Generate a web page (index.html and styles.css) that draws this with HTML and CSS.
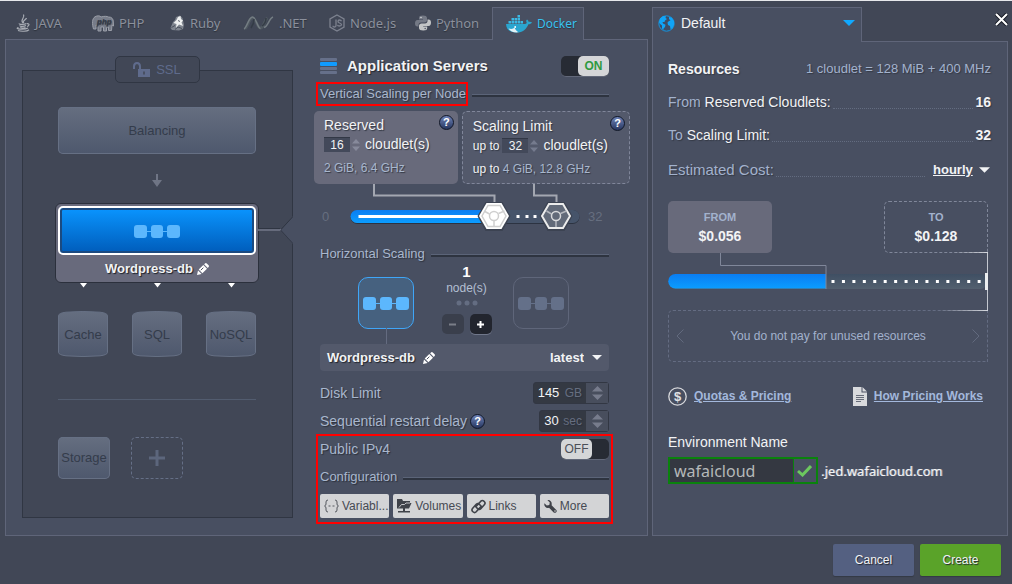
FILE: index.html
```html
<!DOCTYPE html>
<html lang="en">
<head>
<meta charset="utf-8">
<title>Environment Topology</title>
<link rel="stylesheet" href="styles.css">
</head>
<body>
<svg class="defs" width="0" height="0" aria-hidden="true">
  <defs>
    <linearGradient id="blue" x1="0" y1="0" x2="0" y2="1"><stop offset="0" stop-color="#0a7df2"/><stop offset="1" stop-color="#0b9dff"/></linearGradient>
    <linearGradient id="slot" x1="0" y1="0" x2="0" y2="1"><stop offset="0" stop-color="#3f4f63"/><stop offset="1" stop-color="#53606f"/></linearGradient>
    <linearGradient id="cyl" x1="0" y1="0" x2="0" y2="1"><stop offset="0" stop-color="#656e80"/><stop offset="1" stop-color="#4e586d"/></linearGradient>
    <symbol id="pencil" viewBox="0 0 12 12"><path fill="#fff" d="M0 12l1-4.600 3.600 3.600zM1.700 6.600l4.600-4.500 3.700 3.700-4.600 4.500zM7.100 1.300L8 .4q.9-.8 1.800 0l1.800 1.800q.8.9 0 1.800l-.8.900z"/><path d="M3.800 7.200l2.600-2.500" stroke="#4c5161" fill="none"/></symbol>
    <symbol id="nodes" viewBox="0 0 46 14"><path d="M12 7.500h22" stroke="currentColor" stroke-width="1"/><rect width="13" height="13" y="1" rx="3" fill="currentColor"/><rect x="17" width="12" height="13" y="1" rx="3" fill="currentColor"/><rect x="33" width="13" height="13" y="1" rx="3" fill="currentColor"/></symbol>
    <symbol id="caret" viewBox="0 0 12 6"><path fill="currentColor" d="M0 0h12L6 6z"/></symbol>
  </defs>
</svg>
<main class="wizard">
  <section class="side left">
    <nav class="tabs">
      <button class="tab"><svg width="14" height="18" viewBox="0 0 14 18" fill="none" stroke="#a9adb5" stroke-width="1.200"><path d="M7 9C3.500 5.500 9.500 4 7.500.5M8 9c-2.500-2 2-3 2.500-5"/><path d="M3.500 9.500c-1.500 1 5 1.300 7 0M4 11.500c-.5 1 4 1.200 6 0M4.500 13.300c0 1 3 1 5 .2M11 9.800c3-.6 2.300 2.200 0 2.700M2.500 13.500c-5 1.700 6 2.600 9.500.5M2 16.500c3 1.200 9 1 11-.8"/></svg>JAVA</button>
      <button class="tab"><svg width="22" height="17" viewBox="0 0 22 17"><path fill="#777c89" stroke="#9a9ea8" d="M1.500 14C0 9 0 3.500 3 1.800 5 .5 8 .5 9 2c3-1 6-.8 7.500 0 3-.2 5 2 4.800 5l.2 4-1.500-1-.5 5.500h-3V12l-2 .3V16h-3v-4H9v4H6v-5l-2-1v4z"/><text x="5" y="9" class="logo-php">php</text></svg>PHP</button>
      <button class="tab"><svg width="15" height="16" viewBox="0 0 15 16"><path fill="#7f858f" d="M.5 13L3 7l2-2 1-3 4-1.500 2.500 2.500L14 10l-1 4-4 1.500-7-.5z"/><path fill="#eef0f0" d="M6.500 5L8 2l2.500-1L11 4l2 1.500-1.500 2L13 11l-4-1.500L6 13l.5-4L3.500 8z"/><path stroke="#3c424f" fill="none" stroke-width=".8" d="M1.500 12.500l3.500-2M5 14.500l3-2.500 4 1.500M8 5.500l2 1"/></svg>Ruby</button>
      <button class="tab net"><svg width="31" height="14" viewBox="0 0 31 14" fill="none"><path stroke="#4f5860" stroke-width="3" d="M2 12.500C5 11 6 2 9.500 2s4.500 10 8 10 4-8.500 7-10"/><path stroke="#747d83" stroke-width="1.500" d="M1 13C4 12 5.500 1 9.500 1c3.500 0 5 11.500 8 11.500M21 11.500c4-1 5-9 9-10.500"/><path stroke="#343c46" stroke-width="1.500" d="M8 12c2-3 3-6 3-9M19 10c3-2 4-6 4-8"/></svg>.NET</button>
      <button class="tab"><svg width="16" height="18" viewBox="0 0 16 18" fill="none" stroke="#7d828f" stroke-width="1.300"><path d="M8 1l7 4v8l-7 4-7-4V5z"/><path d="M7 5.500v6q0 1.500-1.500 1.500T4 11.800M12.500 7.300Q12 6 10.500 6T9 7.500q0 1 1.500 1.500t2 1.500q0 1.500-2 1.500T8.800 10.800"/></svg>Node.js</button>
      <button class="tab"><svg width="16" height="16" viewBox="0 0 16 16"><path fill="#747985" d="M8 .5c-3 0-4 .8-4 2.500v1.500h4V5H2.500C.8 5 0 6.500 0 8.500s.8 3 2.500 3h1V10c0-1.500 1-2.500 2.500-2.500h3.500c1.500 0 2.500-1 2.500-2.200V3C12 1.300 10.500.5 8 .5z"/><path fill="#c3c5c6" d="M8.200 15.500c3 0 4-.8 4-2.500v-1.500h-4V11h5.500c1.500 0 2.300-1.500 2.300-3.500s-.8-3-2.500-3h-1V6c0 1.500-1 2.500-2.500 2.500H6.500C5 8.500 4 9.500 4 10.800V13c0 1.700 1.500 2.500 4.200 2.500z"/><circle cx="6" cy="2.500" r=".8" fill="#d5d6d8"/><circle cx="10.200" cy="13.500" r=".8" fill="#565b68"/></svg>Python</button>
      <button class="tab active"><svg width="26" height="18" viewBox="0 0 26 18"><path fill="#2aa5cf" d="M0 9h19c2 0 2-2 1-3l1-1.500c1 .5 1.500 1.500 1.600 2.300 1-.3 2.500-.2 3.400.4-.8 1.500-2 2-3.600 2C20.500 14 17 17.500 10.500 17.500 4 17.500.5 15 0 9z"/><path fill="#3bb9e4" d="M2.500 6H5v2.500H2.500zM5.500 6H8v2.500H5.500zM8.500 6H11v2.500H8.500zM11.500 6H14v2.500h-2.500zM14.500 6H17v2.500h-2.500zM5.500 3H8v2.500H5.500zM8.500 3H11v2.500H8.500zM11.500 3H14v2.500h-2.500zM11.500 0H14v2.500h-2.500z"/><path fill="#e4f1f5" d="M2.500 13.500c3 1 5 .3 6-1 1 2.500 2.500 4 4 4.800-4.500.6-8-.8-10-3.800z"/><circle cx="9.200" cy="12" r=".9" fill="#fff"/></svg>Docker</button>
    </nav>
    <div class="panel topology">
      <div class="canvas">
        <button class="ssl"><svg width="17" height="15" viewBox="0 0 17 15"><path fill="none" stroke="#5f6b8c" stroke-width="2" d="M1 7V4.500Q1 1 4 1t3 3.500V7"/><path fill="#5f6b8c" d="M5 7h12v8H5z"/><path stroke="#414756" stroke-width="1.500" d="M11 9.500v3"/></svg>SSL</button>
        <button class="layer balancing">Balancing</button>
        <svg class="down" width="10" height="13" viewBox="0 0 10 13"><path fill="#6f7585" d="M4 0h2v6h4l-5 7-5-7h4z"/></svg>
        <div class="selected">
          <button class="server" aria-label="Application server"><svg width="46" height="14"><use href="#nodes"/></svg></button>
          <div class="caption">Wordpress-db <svg width="12" height="12"><use href="#pencil"/></svg></div>
          <svg class="link" width="35" height="28" viewBox="0 0 35 28"><path fill="#484f61" d="M35 0L23 14l12 14z"/><path stroke="#2f3542" fill="none" d="M0 12.500h22M23 13.500L35 .5"/><path stroke="#666b7c" stroke-width="2" fill="none" d="M0 14h23"/><path stroke="#343a48" fill="none" d="M22.500 14L35 27.500"/></svg>
        </div>
        <svg class="ports" width="198" height="5" viewBox="0 0 198 5"><path fill="#fff" d="M22 0h7l-3.500 4.500zM96 0h7l-3.500 4.500zM170 0h7l-3.500 4.500z"/></svg>
        <div class="stores">
          <button class="store"><svg viewBox="0 0 50 46"><path fill="url(#cyl)" stroke="#667084" d="M.5 4.500Q1 2 8 1.200q17-1.500 34 0Q49 2 49.500 4.500v37Q49 44 42 44.800q-17 1.500-34 0Q1 44 .5 41.500z"/></svg><span>Cache</span></button>
          <button class="store"><svg viewBox="0 0 50 46"><path fill="url(#cyl)" stroke="#667084" d="M.5 4.500Q1 2 8 1.200q17-1.500 34 0Q49 2 49.500 4.500v37Q49 44 42 44.800q-17 1.500-34 0Q1 44 .5 41.500z"/></svg><span>SQL</span></button>
          <button class="store"><svg viewBox="0 0 50 46"><path fill="url(#cyl)" stroke="#667084" d="M.5 4.500Q1 2 8 1.200q17-1.500 34 0Q49 2 49.500 4.500v37Q49 44 42 44.800q-17 1.500-34 0Q1 44 .5 41.500z"/></svg><span>NoSQL</span></button>
        </div>
        <hr class="divider">
        <div class="extras">
          <button class="layer storage">Storage</button>
          <button class="add" aria-label="Add layer"><svg width="16" height="16" viewBox="0 0 16 16"><path stroke="#5c667c" stroke-width="3" d="M8 0v16M0 8h16"/></svg></button>
        </div>
      </div>

      <div class="settings">
        <header class="title">
          <svg width="17" height="18" viewBox="0 0 17 18"><rect width="17" height="3" rx="1" y="1" fill="#66708a"/><rect width="17" height="4" rx="1" y="5" fill="#109bff"/><rect width="17" height="3" rx="1" y="10" fill="#66708a"/><rect width="17" height="3" rx="1" y="14" fill="#66708a"/></svg>
          <h2>Application Servers</h2>
          <label class="toggle"><input type="checkbox" checked aria-label="Application servers"><span class="knob">ON</span></label>
        </header>
        <h3 class="rule"><span class="marked">Vertical Scaling per Node</span></h3>
        <div class="cards">
          <div class="card reserved">
            <i class="help">?</i>
            <label for="res">Reserved</label>
            <div class="amount"><input id="res" value="16"><svg width="8" height="14" viewBox="0 0 8 14"><path fill="#878a9b" d="M0 5.500L4 1l4 4.500zM0 8.500h8L4 13z"/></svg><b>cloudlet(s)</b></div>
            <small>2 GiB, 6.4 GHz</small>
          </div>
          <div class="card limit">
            <i class="help">?</i>
            <label for="lim">Scaling Limit</label>
            <div class="amount"><em>up to</em><input id="lim" value="32"><svg width="8" height="14" viewBox="0 0 8 14"><path fill="#757b8e" d="M0 5.500L4 1l4 4.500zM0 8.500h8L4 13z"/></svg><b>cloudlet(s)</b></div>
            <small><em>up to</em> 4 GiB, 12.8 GHz</small>
          </div>
        </div>
        <div class="slider">
          <span class="bound">0</span>
          <svg viewBox="0 0 230 52" aria-hidden="true">
            <rect x="1" y="26" width="229" height="14" rx="7" fill="#2c3341"/><rect x="1" y="26" width="229" height="13" rx="6.500" fill="#46546a"/>
            <path fill="url(#blue)" d="M7.500 26H145v13H7.500a6.500 6.500 0 010-13z"/>
            <path stroke="#fff" stroke-width="3" d="M9 32.500h120"/>
            <path fill="#fff" d="M167 31h3v3h-3zM176 31h3v3h-3zM184 31h3v3h-3z"/>
            <path fill="none" stroke="#a3a7b1" stroke-width="2" d="M24.500 0v11.500H145V20M184.500 0v11.500H207V20"/>
            <path fill="#3c4352" d="M128 32l8-14h17l8 14-8 15h-17z"/><path fill="#fff" d="M129.500 32l7.500-13h15l7.500 13-7.500 13h-15z"/><g fill="none" stroke="#cfcfcf" stroke-width="1.500"><path d="M132.500 32l6-10.500h12l6 10.500-6 10.500h-12zM134.500 27l5.500 3M155 27l-6 2.500M144.500 36.500v6"/><circle cx="144.500" cy="32" r="4.500"/></g>
            <path fill="#3c4352" d="M190 32l8-14h17l8 14-8 15h-17z"/><path fill="#626a79" stroke="#ececec" stroke-width="2" d="M192.500 32l7-12h14l7 12-7 12h-14z"/><g fill="none" stroke="#b4b7be" stroke-width="1.500"><path d="M197 27l5 3M217 27l-6 2.500M206.500 36.500v6.500"/><circle cx="206.500" cy="32" r="4.500" stroke="#d9dadc"/></g>
          </svg>
          <span class="bound">32</span>
          <input class="range" type="range" min="0" max="32" value="16" aria-label="Reserved cloudlets">
          <input class="range" type="range" min="0" max="32" value="32" aria-label="Scaling limit">
        </div>
        <h3 class="rule"><span>Horizontal Scaling</span></h3>
        <div class="scaling">
          <div class="node on"><svg width="46" height="14"><use href="#nodes"/></svg></div>
          <div class="count"><strong>1</strong><span>node(s)</span><svg width="22" height="6" viewBox="0 0 22 6"><g fill="#646d82"><circle cx="3" cy="3" r="2.500"/><circle cx="11" cy="3" r="2.500"/><circle cx="19" cy="3" r="2.500"/></g></svg>
            <div class="steps"><button aria-label="Remove node"><svg width="7" height="7" viewBox="0 0 7 7"><path stroke="#7a7e88" stroke-width="2" d="M0 3.500h7"/></svg></button><button class="plus" aria-label="Add node"><svg width="7" height="7" viewBox="0 0 7 7"><path stroke="#fff" stroke-width="2" d="M0 3.500h7M3.500 0v7"/></svg></button></div>
          </div>
          <div class="node"><svg width="46" height="14"><use href="#nodes"/></svg></div>
        </div>
        <div class="version"><label for="tag">Wordpress-db</label><svg width="12" height="12"><use href="#pencil"/></svg><select id="tag"><option>latest</option></select><svg width="10" height="5"><use href="#caret"/></svg></div>
        <div class="field"><label for="disk">Disk Limit</label><span class="spin"><input id="disk" class="w3" value="145"><span>GB</span><i><svg width="11" height="14" viewBox="0 0 11 14"><path fill="#777c8c" d="M0 5.500L5.500 0 11 5.500zM0 8.500h11L5.500 14z"/></svg></i></span></div>
        <div class="field"><label for="delay">Sequential restart delay</label><i class="help">?</i><span class="spin"><input id="delay" value="30"><span>sec</span><i><svg width="11" height="14" viewBox="0 0 11 14"><path fill="#777c8c" d="M0 5.500L5.500 0 11 5.500zM0 8.500h11L5.500 14z"/></svg></i></span></div>
        <div class="marked group">
          <div class="field"><label for="ip">Public IPv4</label><label class="toggle off"><input id="ip" type="checkbox"><span class="knob">OFF</span></label></div>
          <h3 class="rule"><span>Configuration</span></h3>
          <div class="config">
            <button><svg width="15" height="14" viewBox="0 0 15 14" fill="none" stroke="#55585f"><path d="M4 1Q2 1 2 3v2q0 1.500-1.500 2Q2 7.500 2 9v2q0 2 2 2M11 1q2 0 2 2v2q0 1.500 1.500 2-1.500.5-1.500 2v2q0 2-2 2M4.500 7h2M8.500 7h2"/></svg>Variabl...</button>
            <button><svg width="15" height="14" viewBox="0 0 15 14" fill="#3f4249"><path d="M0 0h5l1 2h7v2h1.500L12 9.500H8V12h5v1.500H1V12h5V9.500H0z"/><path stroke="#d3d4d6" stroke-width=".9" fill="none" d="M2 8.500L4.500 5.500h3L9 4h4"/></svg>Volumes</button>
            <button><svg width="15" height="15" viewBox="0 0 15 15" fill="none" stroke="#3f4249" stroke-width="1.600"><path d="M6 9L4.800 7.800l5-5.600c2-1.800 5.500 1 3.700 3.300l-3.700 4.200C8.500 11 7 10.500 6 9zM8.800 5.700l1.400 1.500-5 5.600c-2 2-5.500-1-3.700-3.300l3.700-4.200C6.500 4.200 8 4.500 8.800 5.700z"/></svg>Links</button>
            <button><svg width="13" height="13" viewBox="0 0 13 13" fill="#3f4249"><path d="M3.500.2L5.800 2.500 5.300 5l-2.500.5L.4 3.200C-.3 6 2 8.600 5 7.700l4.700 4.700c1.700 1.400 4-.8 2.600-2.500L7.600 5.200C8.400 2.300 6.200-.4 3.500.2zM11 10.200a.8.800 0 110 1.600.8.800 0 010-1.600z"/></svg>More</button>
          </div>
        </div>
      </div>
    </div>
  </section>

  <section class="side right">
    <div class="region-bar">
      <div class="region">
        <svg width="17" height="17" viewBox="0 0 17 17"><circle cx="8.500" cy="8.500" r="7.700" fill="#3d4d66" stroke="#1595e0"/><path fill="#10a4f7" d="M1 7l1-3.500L5 1l3 .3-.5 1.700L9 4 7 5.500 6.500 7H4.500L5 8.500l2.500 1.300L7 12l-1.500 1.500V15L4 13.500V10.500L1.500 8.500zM11 2l2.500.5L16 6v4l-1.500 3.500L12.500 14l-.5-3-2-1-.5-2.500L11 6l1.500-.5L11 4z"/></svg>
        <select aria-label="Region"><option>Default</option></select>
        <svg class="cyan" width="12" height="6"><use href="#caret"/></svg>
      </div>
      <button class="close" aria-label="Close"><svg width="13" height="13" viewBox="0 0 13 13"><path stroke="#171b24" stroke-width="4" d="M1 1l11 11M12 1L1 12"/><path stroke="#fff" stroke-width="2" d="M1 1l11 11M12 1L1 12"/></svg></button>
    </div>
    <div class="panel pricing">
      <div class="line head"><h2>Resources</h2><span class="soft">1 cloudlet = 128 MiB + 400 MHz</span></div>
      <div class="line"><span><i>From</i> Reserved Cloudlets:</span><u></u><b>16</b></div>
      <div class="line"><span><i>To</i> Scaling Limit:</span><u></u><b>32</b></div>
      <div class="line cost"><label for="period">Estimated Cost:</label><u></u><select id="period"><option>hourly</option></select><svg width="11" height="6"><use href="#caret"/></svg></div>
      <div class="estimate">
        <div class="prices">
          <div class="price from"><span>FROM</span><b>$0.056</b></div>
          <div class="price to"><span>TO</span><b>$0.128</b></div>
        </div>
        <svg class="meter" viewBox="0 0 320 57" preserveAspectRatio="none" aria-hidden="true">
          <rect x="1" y="21" width="318" height="15" rx="7" fill="url(#slot)"/>
          <path fill="url(#blue)" d="M7.500 21H158v14.500H7.500a7 7 0 010-14.500z"/>
          <path stroke="#fff" stroke-width="3" stroke-dasharray="3 7.440" d="M163.500 28.500H316"/>
          <path fill="none" stroke="#80879a" d="M52.500 0v12.500H158V36"/>
          <path stroke="#c4c8d0" d="M319.500 0v57"/><path stroke="#eceef0" stroke-width="3" d="M318.500 20v17"/>
        </svg>
        <div class="tip"><svg width="8" height="14" viewBox="0 0 8 14"><path fill="none" stroke="#626a7e" d="M7.500.5L1 7l6.500 6.500"/></svg><span>You do not pay for unused resources</span><svg width="8" height="14" viewBox="0 0 8 14"><path fill="none" stroke="#626a7e" d="M.5.5L7 7 .5 13.500"/></svg></div>
      </div>
      <div class="links">
        <svg width="19" height="19" viewBox="0 0 19 19"><circle cx="9.500" cy="9.500" r="8.700" fill="none" stroke="#d8d9dc" stroke-width="1.300"/><text x="9.500" y="14" class="dollar">$</text></svg><a href="#quotas">Quotas &amp; Pricing</a>
        <svg class="doc" width="14" height="19" viewBox="0 0 14 19"><path fill="#d9dadd" d="M0 0h8.500v5.500H14V19H0zM9.500 0L14 4.500H9.500z"/><path stroke="#676c79" d="M3 8.500h8M3 10.500h8M3 12.500h8M3 14.500h5"/></svg><a href="#pricing">How Pricing Works</a>
      </div>
      <label class="env" for="env">Environment Name</label>
      <div class="domain"><span class="valid"><input id="env" value="wafaicloud"><svg width="15" height="12" viewBox="0 0 15 12"><path fill="none" stroke="#6cc85f" stroke-width="3" d="M1 6l4.500 4L14 1"/></svg></span><span>.jed.wafaicloud.com</span></div>
    </div>
  </section>
</main>
<footer class="actions"><button>Cancel</button><button class="create">Create</button></footer>
</body>
</html>
```
FILE: styles.css
```css
* { box-sizing: border-box; }
body {
  margin: 0;
  min-height: 100vh;
  display: flex;
  flex-direction: column;
  background: #414756;
  border-top: 1px solid #e6e8eb;
  color: #f2f3f5;
  font: 13px/16px "Liberation Sans", Arial, sans-serif;
}
button, input, select { font: inherit; color: inherit; margin: 0; padding: 0; border: 0; background: none; }
button { cursor: pointer; }
select { appearance: none; }
h2, h3 { margin: 0; font-weight: normal; }
svg { display: block; flex: none; }
i, em { font-style: normal; }
.defs { position: absolute; }

.wizard { flex: 1; display: flex; gap: 4px; padding: 0 4px 0 5px; }
.side { display: flex; flex-direction: column; min-width: 0; }
.left { flex: 643 1 0; }
.right { flex: 356 1 0; }
.panel { flex: 1; background: #484f61; border: 1px solid #5f6579; }

.tabs {
  display: grid;
  grid-template-columns: 76px 78px 73px 86px 86px 88px 92px;
  height: 38px;
  padding-top: 6px;
}
.tab {
  display: flex;
  align-items: center;
  gap: 5px;
  padding: 0 0 0 11px;
  color: #8b909c;
  font: 13px/16px "Noto Sans", "Open Sans", sans-serif;
  text-shadow: 0 1px 1px #2c313c;
}
.tab.active {
  margin-bottom: -1px;
  padding-left: 13px;
  background: #484f61;
  border: 1px solid #5f6579;
  border-bottom: 0;
  color: #38c2f0;
  font-size: 12px;
  z-index: 1;
}
.logo-php { font: italic bold 8px "Liberation Sans", sans-serif; fill: #343a47; }

.topology {
  display: grid;
  grid-template-columns: 271fr 289fr;
  gap: 27px;
  padding: 0 38px 17px 16px;
}
.canvas {
  position: relative;
  display: flex;
  flex-direction: column;
  align-items: center;
  margin-top: 30px;
  padding: 36px 36px 36px 35px;
  background: #414756;
  border: 1px solid #303643;
}
.ssl {
  position: absolute;
  top: -15px;
  display: flex;
  align-items: center;
  justify-content: center;
  gap: 6px;
  width: 85px;
  height: 27px;
  background: #414756;
  border: 1px solid #303643;
  border-radius: 5px;
  color: #5f6b8c;
}
.layer {
  background: linear-gradient(#656e80, #4e586d);
  border-radius: 5px;
  box-shadow: inset 0 0 0 1px #667084;
  color: #343c4b;
}
.balancing { align-self: stretch; height: 47px; }
.down { margin: 20px 0 16px; }
.selected {
  position: relative;
  align-self: stretch;
  margin: 0 -3px;
  padding: 2px 2px 0;
  height: 80px;
  background: #686a7c;
  border: 1px solid #2b303c;
  border-radius: 6px;
}
.server {
  display: flex;
  width: 100%;
  height: 49px;
  align-items: center;
  justify-content: center;
  border: 2px solid #fff;
  border-radius: 5px;
  background: linear-gradient(#0a95ff, #005cba);
  box-shadow: inset 0 0 0 2px #1b4a80;
  color: #5cb7fd;
}
.caption {
  display: flex;
  align-items: center;
  justify-content: center;
  gap: 4px;
  height: 27px;
  font-weight: bold;
  text-shadow: 1px 1px 1px #1d212a;
}
.link { position: absolute; left: 100%; top: 12px; }
.ports { margin-bottom: 23px; }
.stores { align-self: stretch; display: flex; justify-content: space-between; }
.store { position: relative; width: 50px; height: 46px; color: #343c4b; }
.store span { position: absolute; inset: 0; line-height: 47px; }
.divider { align-self: stretch; width: 100%; margin: 42px 0 37px; border: 0; border-top: 1px solid #525c6f; }
.extras { align-self: stretch; display: flex; gap: 21px; }
.storage { width: 52px; height: 42px; }
.add { display: grid; place-items: center; width: 52px; height: 42px; border: 1px dashed #656f86; border-radius: 5px; }

.settings { padding-top: 15px; min-width: 0; }
.title { display: flex; align-items: center; gap: 10px; height: 22px; text-shadow: 1px 1px 1px #22262f; }
.title h2 { font-size: 15px; font-weight: bold; flex: 1; white-space: nowrap; }
.toggle { display: flex; width: 48px; height: 21px; border-radius: 5px; background: #272b34; justify-content: flex-end; border-bottom: 1px solid #626879; }
.toggle.off { justify-content: flex-start; }
.toggle input { position: absolute; opacity: 0; }
.knob { width: 31px; border-radius: 5px; background: #d5d6d8; color: #2e9a41; font-size: 12px; font-weight: bold; line-height: 20px; text-align: center; text-shadow: none; }
.off .knob { color: #4c4f58; font-weight: normal; }
.rule { display: flex; align-items: center; gap: 6px; margin: 9px 0; font-size: 13px; line-height: 16px; color: #a9b7cd; text-shadow: 1px 1px 1px #2c313c; }
.rule::after { content: ""; flex: 1; height: 2px; margin-top: 3px; background: #2e3440; border-top: 1px solid #5b6478; }
.marked { position: relative; }
.marked::after { content: ""; position: absolute; inset: -4px -2px -4px -4px; border: 2px solid #f00; pointer-events: none; }
.group::after { inset: -4px -4px -6px; }
.cards { display: flex; gap: 4px; margin: 0 -21px 0 -6px; }
.card { position: relative; height: 73px; padding: 6px 10px; border-radius: 5px; text-shadow: 1px 1px 1px #343945; }
.reserved { flex: 143 1 0; background: #686a7b; }
.limit { flex: 169 1 0; background: #53596b; border: 1px dashed #80869a; }
.card label { display: block; font-size: 14px; line-height: 17px; }
.amount { display: flex; align-items: center; margin: 2px 0 7px; }
.amount input { width: 26px; height: 15px; background: #43495a; border-top: 1px solid #323846; text-align: center; font-size: 12px; }
.amount svg { margin: 0 5px 0 2px; }
.amount b { font-weight: normal; font-size: 14px; line-height: 17px; }
.amount em { margin-right: 3px; font-size: 12px; }
.card small { display: block; font-size: 12px; color: #a9b7cd; white-space: nowrap; }
.card small em { color: #f2f3f5; }
.help { display: grid; place-items: center; width: 15px; height: 15px; border: 1px solid #101728; border-radius: 8px; background: linear-gradient(#6e83b8, #27365f); color: #fff; font-size: 11px; font-weight: bold; line-height: 13px; text-shadow: none; }
.card .help { position: absolute; right: 4px; top: 4px; }
.slider { position: relative; display: flex; height: 52px; }
.slider svg { flex: 1; min-width: 0; height: 52px; }
.bound { width: 29px; padding: 25px 0 0 2px; color: #666e7f; }
.bound:nth-of-type(2) { padding-left: 8px; }
.range { position: absolute; left: 29px; right: 29px; bottom: 10px; opacity: 0; }
.slider + .rule { margin: 10px 0 2px; }
.scaling { display: flex; justify-content: space-between; height: 80px; padding: 13px 40px 0 38px; }
.node { position: relative; display: grid; place-items: center; width: 56px; height: 52px; border: 1px solid #5f667a; border-radius: 10px; color: #647089; }
.node.on { background: #46617f; border-color: #3fa6f8; color: #5cb7fd; }
.node.on::after { content: ""; position: absolute; top: 100%; left: 50%; width: 1px; height: 16px; background: #646b80; }
.count { display: flex; flex-direction: column; align-items: center; margin: -13px 0 0 6px; line-height: 16px; font-size: 12px; color: #b3bfd2; }
.count strong { font-size: 15px; color: #fff; }
.count > svg { margin: 4px 0 8px; }
.steps { display: flex; gap: 6px; }
.steps button { display: grid; place-items: center; width: 22px; height: 20px; border-radius: 5px; background: #3a3f4c; }
.steps .plus { background: #22252e; box-shadow: 0 1px 0 #70778a; }
.version { display: flex; align-items: center; height: 27px; padding: 0 7px; border-radius: 4px; background: #53596b; font-weight: bold; text-shadow: 1px 1px 1px #22262f; }
.version svg { margin-left: 8px; }
.version select { margin-left: auto; font-weight: bold; }
.version + .field { margin-top: 11px; }
.field { display: flex; align-items: center; height: 22px; margin-bottom: 6px; font-size: 14px; color: #a9b7cd; text-shadow: 1px 1px 1px #2c313c; }
.field .help { margin-left: 3px; }
.field .toggle { margin-left: auto; }
.spin { display: flex; align-items: center; margin-left: auto; height: 22px; border: 1px solid #323743; border-radius: 3px; background: #343943; font-size: 12px; color: #666e80; }
.spin input { width: 15px; margin: 0 4px; font-size: 13px; color: #f2f3f5; }
.spin .w3 { width: 23px; }
.spin i { display: grid; place-items: center; width: 22px; height: 20px; margin-left: 4px; background: #484e5d; }
.config { display: flex; gap: 4px; }
.config button { flex: 1 1 0; min-width: 0; display: flex; align-items: center; justify-content: flex-start; gap: 3px; height: 24px; padding: 0 2px 0 4px; border-radius: 2px; background: #d3d4d6; color: #464a53; font-size: 12px; white-space: nowrap; }

.region-bar { display: flex; align-items: flex-start; justify-content: space-between; height: 40px; padding-top: 6px; }
.region { position: relative; display: flex; align-items: center; width: 210px; height: 35px; padding: 0 6px 4px 5px; background: #484f61; border: 1px solid #5f6579; border-bottom: 0; }
.region select { flex: 1; margin-left: 6px; font-size: 14px; }
.cyan { color: #10a9ff; }
.close { margin-top: 6px; }
.pricing { padding: 17px 16px 17px 15px; }
.line { display: flex; align-items: center; height: 20px; margin-bottom: 13px; font-size: 14px; white-space: nowrap; text-shadow: 1px 1px 1px #343945; }
.line h2 { font-size: 14px; font-weight: bold; }
.head { justify-content: space-between; }
.line i, .line label, .line .soft { color: #a3b2cd; }
.line .soft { font-size: 13px; }
.line u { flex: 1; margin: 12px 2px 0; border-top: 1px dotted #636c80; }
.cost { margin-top: 15px; }
.cost label { font-size: 15px; }
.cost u { margin-right: 8px; }
.cost select { font-size: 13px; font-weight: bold; text-decoration: underline; }
.cost svg { margin: 0 1px 0 6px; }
.estimate { margin: 21px 3px 0 0; }
.prices { display: flex; justify-content: space-between; font-weight: bold; }
.price { position: relative; display: flex; flex-direction: column; align-items: center; justify-content: center; gap: 4px; width: 104px; height: 52px; border-radius: 5px; font-size: 14px; }
.price span { font-size: 11px; line-height: 14px; color: #a3b2cd; }
.from { background: #686a7b; }
.to { border: 1px dashed #80879a; border-radius: 5px 5px 0 5px; }
.to::after { content: ""; position: absolute; right: -1px; bottom: -1px; width: 36px; height: 1px; background: linear-gradient(90deg, transparent, #d5d8de); }
.meter { width: 100%; height: 57px; }
.tip { position: relative; display: flex; align-items: center; justify-content: space-between; height: 52px; padding: 0 7px; border: 1px dashed #646c82; border-radius: 5px 0 0 5px; color: #a3b2cd; font-size: 12px; }
.tip::after { content: ""; position: absolute; right: -1px; top: -1px; width: 50px; height: 1px; background: linear-gradient(90deg, transparent, #d5d8de); }
.links { display: flex; align-items: center; height: 20px; margin: 24px 8px 26px 0; font-size: 12px; }
.links a { margin-left: 7px; color: #a3b8dc; font-weight: bold; }
.links .doc { margin-left: auto; }
.dollar { font: bold 13px "Liberation Sans", sans-serif; fill: #e0e1e4; text-anchor: middle; }
.env { display: block; font-size: 14px; line-height: 20px; }
.domain { display: flex; align-items: center; margin-top: 5px; font: 13px/16px "Noto Sans", "Open Sans", sans-serif; text-shadow: 1px 0 0 #9a9ea8; }
.valid { display: flex; align-items: center; width: 150px; height: 27px; margin-right: 3px; border: 2px solid #0a820d; }
.valid input { flex: 1; min-width: 0; align-self: stretch; padding: 0 4px; background: #343841; border-right: 1px solid #0a820d; color: #b5b8b9; font-size: 16px; }
.valid svg { margin: 0 4px 0 3px; }
.actions { display: flex; justify-content: flex-end; gap: 6px; padding: 8px 11px 9px; }
.actions button { width: 81px; height: 32px; border-radius: 2px; background: #546081; font-size: 12px; text-shadow: 1px 1px 1px #22262f; box-shadow: 0 1px 1px #343945; }
.actions .create { background: #5aa329; }
```
